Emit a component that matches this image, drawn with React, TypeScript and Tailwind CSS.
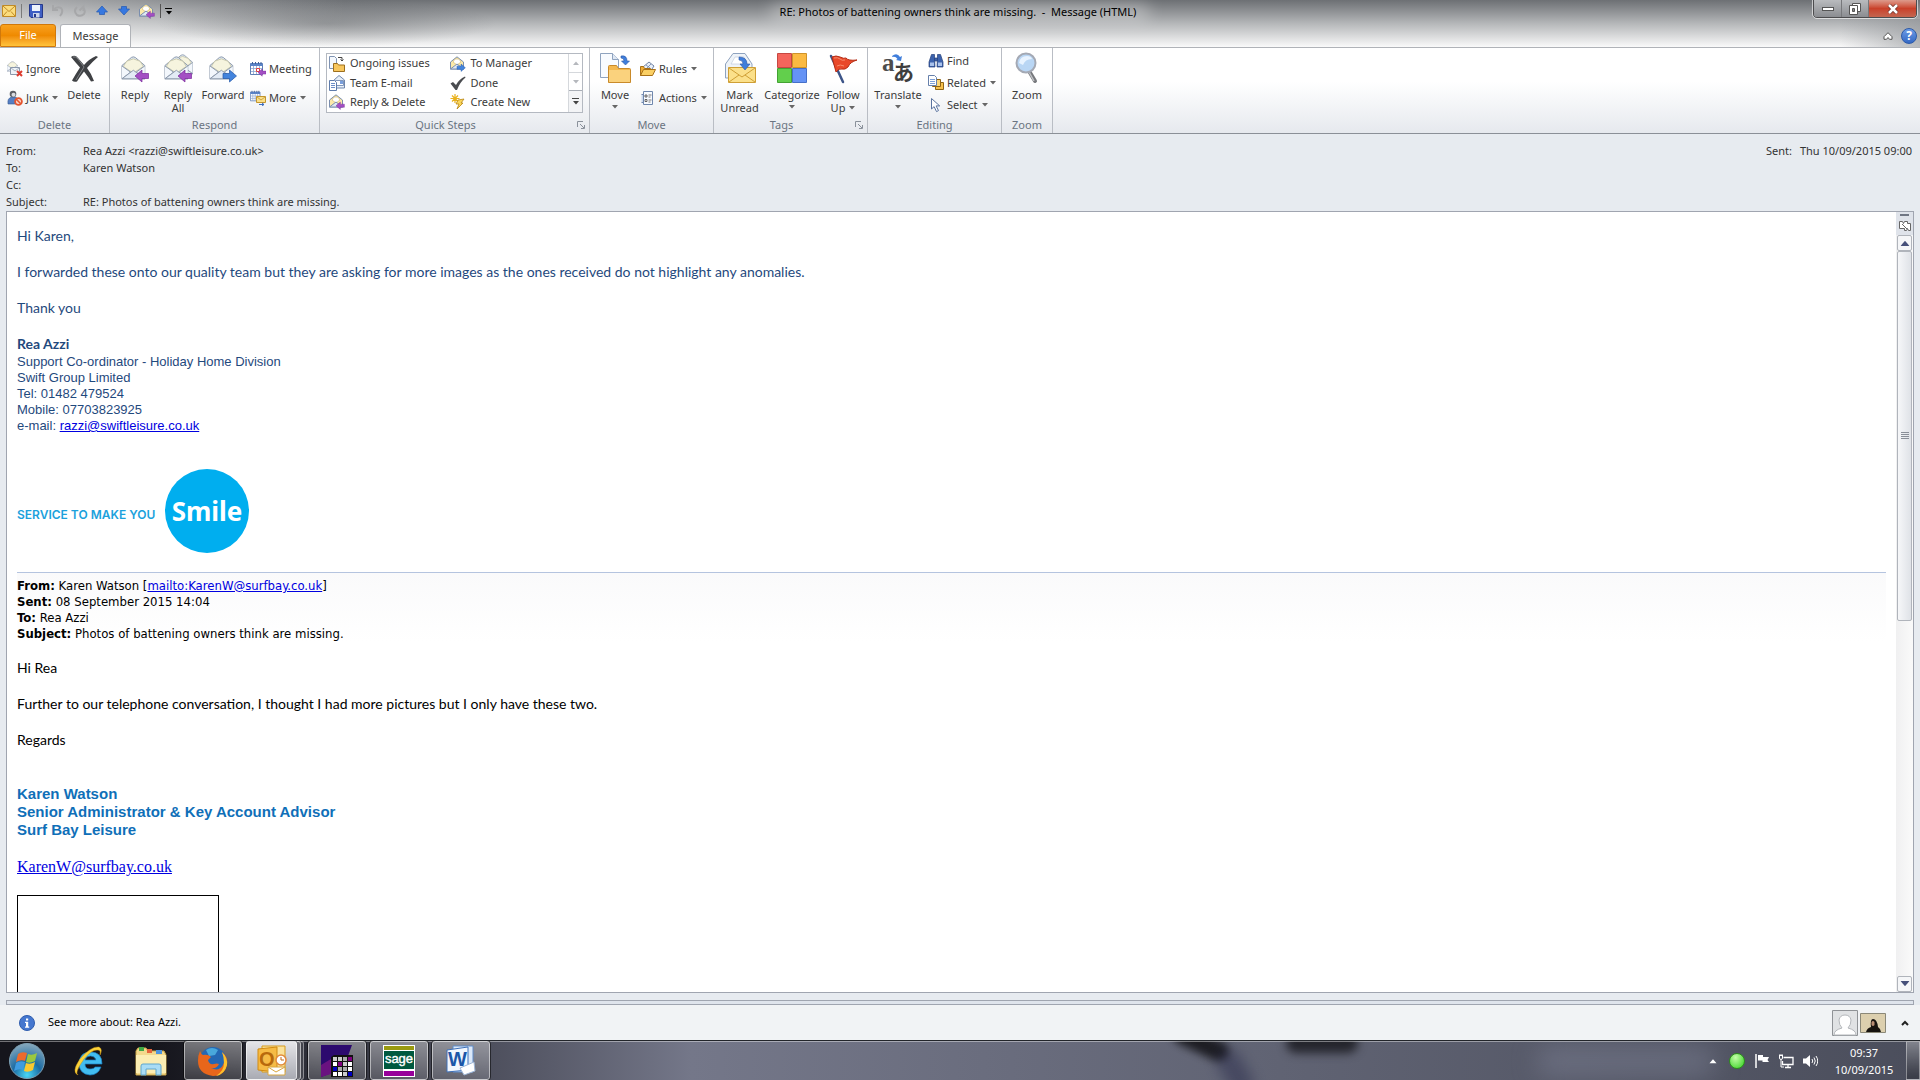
import React from "react";
import clsx from "clsx";

type IconProps = { className?: string };

/* ---------- Small shared drawings ---------- */

const Caret = ({ className = "text-[#666]" }: IconProps) => (
  <svg viewBox="0 0 6 4" className={clsx("w-[6px] h-1 shrink-0", className)}>
    <path d="M0 0h6L3 3.5z" fill="currentColor" />
  </svg>
);

const Launcher = () => (
  <svg viewBox="0 0 8 8" className="size-2" fill="none" stroke="#8a919b">
    <path d="M.5 6V.5H6M3 3l4 4M7.500 4v3.500H4" />
  </svg>
);

const LeftArrow = ({ x = 0, y = 0, s = 1 }) => (
  <path
    transform={`translate(${x} ${y}) scale(${s})`}
    d="M0 6 7 0v3.500h6.500v5H7V12z"
    fill="#a44fc4"
    stroke="#7a2b9b"
    strokeWidth=".7"
  />
);

const RightArrow = ({ x = 0, y = 0, s = 1 }) => (
  <path
    transform={`translate(${x} ${y}) scale(${s})`}
    d="M13.500 6 6.500 0v3.500H0v5h6.500V12z"
    fill="#4384dd"
    stroke="#2457a8"
    strokeWidth=".7"
  />
);

const OpenMail = ({ x = 0, y = 0, s = 1 }) => (
  <g transform={`translate(${x} ${y}) scale(${s})`} stroke="#8b98ab">
    <path d="M1 10 11 1.500q2-1.200 4 0L25 10v14H1z" fill="#dbe5f1" />
    <path d="M2.500 11 6 5.500l7-2.500 7 2.500 3.500 5.500L13 18z" fill="#f6f4de" stroke="#c9c8ac" />
    <path d="M1 10.500 10 17 1 24M25 10.500 16 17l9 7" fill="#f3f7fc" />
    <path d="M1 24 13 15l12 9z" fill="#e3ebf5" />
  </g>
);

/* ---------- Large ribbon icons ---------- */

const DeleteIcon = () => (
  <svg viewBox="0 0 32 32" className="size-8">
    <path
      d="M3 5q4-3 7 1l6 7q5-6 12-9l2 1q-6 5-11 11 4 5 7 13l-3 .5q-3-5-7-10-4 5-7 10-3 1-5-1 4-7 8-13Q7 10 3 5z"
      fill="#3f4144"
    />
    <path d="M5 5q3-1 5 2l6 8-8 13" fill="none" stroke="#7f8286" />
  </svg>
);

const ReplyIcon = () => (
  <svg viewBox="0 0 32 32" className="size-8">
    <OpenMail x={2} y={4} s={0.95} />
    <LeftArrow x={16} y={18} s={1} />
  </svg>
);

const ReplyAllIcon = () => (
  <svg viewBox="0 0 32 32" className="size-8">
    <OpenMail x={10} y={2} s={0.82} />
    <OpenMail x={2} y={4} s={0.95} />
    <LeftArrow x={16} y={18} s={1} />
  </svg>
);

const ForwardIcon = () => (
  <svg viewBox="0 0 32 32" className="size-8">
    <OpenMail x={2} y={4} s={0.95} />
    <RightArrow x={16} y={18} s={1} />
  </svg>
);

const MoveIcon = () => (
  <svg viewBox="0 0 32 32" className="size-8">
    <path d="M1.500 1.500h12l6 6v18h-18z" fill="#f8fbff" stroke="#8fa3bf" />
    <path d="M13.500 1.500v6h6" fill="#dfe8f4" stroke="#8fa3bf" />
    <path d="M22 4q6-1 6 5h2.500l-4 4-4-4H25q0-3-3-3z" fill="#3f7edb" stroke="#2b58a5" strokeWidth=".6" />
    <path d="M9.500 30.500v-16q0-1 1-1h7l2 3h11q1 0 1 1v13z" fill="#f4b84e" stroke="#c98a2a" />
    <path d="M10 30V18h21v12z" fill="#fad27d" />
  </svg>
);

const MarkUnreadIcon = () => (
  <svg viewBox="0 0 32 32" className="size-8">
    <path d="M1.500 12 9 1.500h12L28 12v14H1.500z" fill="#eef3f8" stroke="#8fa3bf" />
    <path d="M7 12 11 5h9l3 7z" fill="#fff" stroke="#b9c5d6" strokeWidth=".6" />
    <path d="M4.500 15.500h27v15h-27z" fill="#fbe08a" stroke="#cf9f35" />
    <path d="m5 16 13 9 13-9M5 30l10-7M31 30l-10-7" fill="none" stroke="#cf9f35" />
    <path d="M15 5q8 0 8 7h3l-5 6-5-6h3q0-4-4-4z" fill="#3f7edb" stroke="#2b58a5" strokeWidth=".6" />
  </svg>
);

const CategorizeIcon = () => (
  <svg viewBox="0 0 32 32" className="size-8">
    <path d="M1.500 1.500h14v14h-14z" fill="#f4655c" stroke="#c64842" />
    <path d="M16.500 1.500h14v14h-14z" fill="#fbba42" stroke="#cf932a" />
    <path d="M1.500 16.500h14v14h-14z" fill="#62cf4c" stroke="#43a233" />
    <path d="M16.500 16.500h14v14h-14z" fill="#6593f5" stroke="#456fc8" />
  </svg>
);

const FollowUpIcon = () => (
  <svg viewBox="0 0 32 32" className="size-8">
    <path d="m4 4 12 26" stroke="#3d5588" strokeWidth="2.500" strokeLinecap="round" />
    <path d="M5 5q4-2 8 0 4 2 6 1 2 3 11 2-7 2-9 7-3 3-6 2-3-1-6 3z" fill="#e9492a" stroke="#b52d15" />
    <path d="M7 6q4-1 6 1t5 1M10 14q3-2 7 0" fill="none" stroke="#f88c6d" />
  </svg>
);

const TranslateIcon = () => (
  <svg viewBox="0 0 32 32" className="size-8 overflow-visible">
    <text x="0" y="19" fontSize="25" fontFamily="Liberation Serif, serif" fontWeight="700" fill="#4d4d4d">
      a
    </text>
    <text x="11" y="28" fontSize="21" fontFamily="Noto Sans CJK JP, sans-serif" fontWeight="700" fill="#3e3e3e">
      あ
    </text>
    <path d="M10 4q5-4 8 1l2-1-1 5-5-1 1.500-1q-2-3-5-2z" fill="#3f7edb" />
  </svg>
);

const ZoomIcon = () => (
  <svg viewBox="0 0 32 32" className="size-8">
    <path d="m18 19 6 10" stroke="#77797d" strokeWidth="4" strokeLinecap="round" />
    <path d="m18 20 5 9" stroke="#c0c2c6" strokeWidth="1.500" />
    <circle cx="15" cy="11" r="9.500" fill="#b9d6f4" stroke="#a4a9b4" strokeWidth="2" />
    <path d="M8 11q1-7 8-7 4 0 5 3-7 0-9 6z" fill="#e8f3ff" />
  </svg>
);

/* ---------- 16px icons ---------- */

const IgnoreIcon = () => (
  <svg viewBox="0 0 16 16" className="size-4">
    <OpenMail x={0} y={0} s={0.42} />
    <path d="M3.500 6.500h9v7h-9z" fill="#eef3f9" stroke="#8b98ab" />
    <path d="M4 7l4 3 4-3" fill="none" stroke="#8b98ab" strokeWidth=".7" />
    <path d="m10 10 5 5m0-5-5 5" stroke="#dd3b2f" strokeWidth="2" />
  </svg>
);

const JunkIcon = () => (
  <svg viewBox="0 0 16 16" className="size-4">
    <path d="M1 14q-1-6 4-7h3q4 1 4 7z" fill="#557fc4" stroke="#34588f" strokeWidth=".6" />
    <circle cx="6" cy="4" r="3.300" fill="#5c5f66" />
    <circle cx="6.500" cy="4.800" r="2" fill="#d9dce2" />
    <circle cx="11.500" cy="11.500" r="3.400" fill="#fbd6cc" stroke="#e4552f" strokeWidth="1.800" />
    <path d="m9 9 5 5" stroke="#e4552f" strokeWidth="1.600" />
  </svg>
);

const CalendarGrid = () => (
  <>
    <path d="M.5 2.500h12v11H.5z" fill="#fff" stroke="#5f7fb5" />
    <path d="M.5 2.500h12V5H.5z" fill="#5b84c8" />
    <path d="M3.500 5v8M6.500 5v8M9.500 5v8M1 7.500h11M1 10.500h11" stroke="#8aa4cf" strokeWidth=".8" />
    <path d="M2.500 1v2M5.500 1v2M8.500 1v2M11 1v2" stroke="#3f5f96" />
  </>
);

const MeetingIcon = () => (
  <svg viewBox="0 0 16 16" className="size-4">
    <CalendarGrid />
    <path d="M6.500 7.500h3v3h-3z" fill="#fff" stroke="#e13f3f" />
    <LeftArrow x={8} y={8} s={0.6} />
  </svg>
);

const MoreIcon = () => (
  <svg viewBox="0 0 16 16" className="size-4">
    <g transform="scale(.8)">
      <CalendarGrid />
    </g>
    <path d="M6.500 6.500h9v6h-9z" fill="#fbe08a" stroke="#c2952e" />
    <path d="m7 7 4 3 4-3" fill="none" stroke="#c2952e" strokeWidth=".8" />
    <path d="M9 14.500h5m-2-1.500 2 1.500-2 1.500" fill="none" stroke="#3f6fc0" />
  </svg>
);

const OngoingIcon = () => (
  <svg viewBox="0 0 16 16" className="size-4">
    <path d="M.5.5h5l2 2v10h-7z" fill="#f4f8fd" stroke="#7f93b3" />
    <path d="M9 1.500h4v3m-1.500-1L13 5l1.500-1.500" fill="none" stroke="#444" />
    <path d="M4.500 15.500v-8h4l1 1.500h6v6.500z" fill="#f7c65d" stroke="#9c6f1f" />
  </svg>
);

const TeamMailIcon = () => (
  <svg viewBox="0 0 16 16" className="size-4">
    <path d="M4 6 10 .5 15.500 5v8H4z" fill="#e6eef8" stroke="#6f87ad" />
    <path d="M6.500 5.500h8v5h-8z" fill="#fff" stroke="#8297ba" />
    <path d="M11 6h3v3h-3z" fill="#7ba0dd" />
    <path d="M.5 5.500h5l2 2v8h-7z" fill="#fff" stroke="#5f7cab" />
    <path d="M2 8.500h4M2 10.500h4M2 12.500h4" stroke="#6d8fc8" />
  </svg>
);

const YellowMail = () => (
  <>
    <path d="M.5 6 7 .8 13.500 6v7H.5z" fill="#fbe9a9" stroke="#7a8eae" />
    <path d="m3 6 2-3h4l2 3-4 3z" fill="#fff" stroke="#cdb268" strokeWidth=".6" />
    <path d="M.5 13 7 8l6.500 5z" fill="#dfe8f4" stroke="#7a8eae" />
  </>
);

const ReplyDeleteIcon = () => (
  <svg viewBox="0 0 16 16" className="size-4">
    <YellowMail />
    <LeftArrow x={7} y={8} s={0.62} />
  </svg>
);

const ToManagerIcon = () => (
  <svg viewBox="0 0 16 16" className="size-4">
    <YellowMail />
    <RightArrow x={7} y={8} s={0.62} />
  </svg>
);

const DoneIcon = () => (
  <svg viewBox="0 0 16 16" className="size-4">
    <path d="m.5 8.500 2.500-1.500 3 3Q9 4 15 1.500l.5 1Q10 7 7 15H5.500z" fill="#4a4c50" />
  </svg>
);

const CreateNewIcon = () => (
  <svg viewBox="0 0 16 16" className="size-4">
    <path d="M5 0v9M.5 4.500h9M2 1.500l6 6M8 1.500l-6 6" stroke="#e9b11d" strokeWidth="1.200" />
    <path d="m8 6 6-1-3 4h2l-6 6 2-5H6z" fill="#fbd75c" stroke="#b98512" strokeWidth=".8" />
  </svg>
);

const RulesIcon = () => (
  <svg viewBox="0 0 16 16" className="size-4">
    <path d="m3 6 6-5 5 4-4 6H3z" fill="#e9eff8" stroke="#6f83a5" />
    <path d="m6 4 4 3m1-4-4 4" stroke="#6f83a5" strokeWidth=".8" />
    <path d="M.5 14.500v-9h3l1 2h6v7z" fill="#f0ad35" stroke="#a87118" />
    <path d="m.5 14.500 3-6h12l-3 6z" fill="#fbd064" stroke="#a87118" />
  </svg>
);

const ActionsIcon = () => (
  <svg viewBox="0 0 16 16" className="size-4">
    <path d="M3.500 1.500h9v13h-9z" fill="#f8fbff" stroke="#6f87ad" />
    <path d="M1.500 4.500h2v8h-2" fill="#cbd8ec" stroke="#6f87ad" />
    <path d="M5 5h2v2H5zM5 9.500h2v2H5z" fill="none" stroke="#444" strokeWidth=".8" />
    <path d="M8.500 5h3M8.500 7h2M8.500 10h3M8.500 12h2" stroke="#555" strokeWidth=".8" />
  </svg>
);

const FindIcon = () => (
  <svg viewBox="0 0 16 16" className="size-4" fill="#3c62ad" stroke="#25407a" strokeWidth=".7">
    <path d="M3.500 1.500h3V5l.5 9H1V9z" />
    <path d="M9.500 1.500h3L15 9v5H9l.5-9z" />
    <path d="M6.500 5h3v3h-3z" />
    <path d="M2 9.500h4v3.500H2zM10 9.500h4v3.500h-4z" fill="#a9c2ec" stroke="none" />
  </svg>
);

const RelatedIcon = () => (
  <svg viewBox="0 0 16 16" className="size-4">
    <path d="M7.500 7.500h8v7h-8z" fill="#f6c04c" stroke="#8f6515" />
    <path d="M4.500 4.500h8v7h-8z" fill="#fbd678" stroke="#8f6515" />
    <path d="M.5.5h6l2 2v8h-8z" fill="#fff" stroke="#6680ab" />
    <path d="M2 4.500h5M2 6.500h5M2 8.500h5" stroke="#7da0d8" />
  </svg>
);

const SelectIcon = () => (
  <svg viewBox="0 0 16 16" className="size-4">
    <path d="M3.500 1.500v10.500l2.600-2.400 2.400 5 2-1-2.400-4.700h3.600z" fill="#fff" stroke="#5b74a0" />
  </svg>
);

/* ---------- Ribbon building blocks ---------- */

const BigButton = ({
  icon: Icon,
  lines,
  caret,
  width,
}: {
  icon: React.FC;
  lines: string[];
  caret?: "below" | "inline";
  width: string;
}) => (
  <button type="button" className={clsx("flex flex-col items-center pt-1 leading-[13px]", width)}>
    <Icon />
    <span className="mt-1 whitespace-nowrap">{lines[0]}</span>
    {lines[1] && (
      <span className="flex items-center gap-1">
        {lines[1]}
        {caret === "inline" && <Caret />}
      </span>
    )}
    {caret === "below" && <Caret className="mt-1 text-[#666]" />}
  </button>
);

const SmallButton = ({ icon: Icon, label, caret }: { icon: React.FC; label: string; caret?: boolean }) => (
  <button type="button" className="flex items-center gap-[3px] h-[22px] whitespace-nowrap">
    <Icon />
    <span>{label}</span>
    {caret && <Caret className="ml-px text-[#666]" />}
  </button>
);

const Group = ({
  title,
  width,
  launcher,
  children,
}: {
  title: string;
  width: string;
  launcher?: boolean;
  children: React.ReactNode;
}) => (
  <section className={clsx("relative flex flex-col shrink-0 border-r border-[#b9bdc4]", width)}>
    <div className="flex h-[69px] shrink-0">{children}</div>
    <h2 className={clsx("text-center text-[#6a7481] leading-4", launcher && "pr-[18px]")}>{title}</h2>
    {launcher && (
      <button type="button" aria-label={`${title} options`} className="absolute right-1 bottom-1">
        <Launcher />
      </button>
    )}
  </section>
);

const quickSteps = [
  { icon: OngoingIcon, label: "Ongoing issues" },
  { icon: ToManagerIcon, label: "To Manager" },
  { icon: TeamMailIcon, label: "Team E-mail" },
  { icon: DoneIcon, label: "Done" },
  { icon: ReplyDeleteIcon, label: "Reply & Delete" },
  { icon: CreateNewIcon, label: "Create New" },
];

const Ribbon = () => (
  <div className="flex h-[87px] shrink-0 border-t border-b border-t-[#b0b3b8] border-b-[#8b9097] bg-linear-to-b from-white from-40% to-[#e6e9ee] text-[11px] text-[#3b3b3b]">
    <Group title="Delete" width="w-[110px]">
      <div className="flex flex-col gap-[7px] pt-[10px] pl-[7px] w-[62px]">
        <SmallButton icon={IgnoreIcon} label="Ignore" />
        <SmallButton icon={JunkIcon} label="Junk" caret />
      </div>
      <BigButton icon={DeleteIcon} lines={["Delete"]} width="w-[44px]" />
    </Group>

    <Group title="Respond" width="w-[210px]">
      <BigButton icon={ReplyIcon} lines={["Reply"]} width="w-[50px]" />
      <BigButton icon={ReplyAllIcon} lines={["Reply", "All"]} width="w-[36px]" />
      <BigButton icon={ForwardIcon} lines={["Forward"]} width="w-[54px]" />
      <div className="flex flex-col gap-[7px] pt-[10px]">
        <SmallButton icon={MeetingIcon} label="Meeting" />
        <SmallButton icon={MoreIcon} label="More" caret />
      </div>
    </Group>

    <Group title="Quick Steps" width="w-[270px]" launcher>
      <div className="flex h-[60px] w-[257px] ml-[6px] mt-[5px] border border-[#b4b9c1] bg-white">
        <div className="grid grid-cols-2 grow">
          {quickSteps.map(({ icon: Icon, label }) => (
            <button key={label} type="button" className="flex items-center gap-[5px] pl-[2px] whitespace-nowrap">
              <Icon />
              {label}
            </button>
          ))}
        </div>
        <div className="flex flex-col w-[14px] border-l border-[#d5d8dc]">
          <button type="button" aria-label="Previous row" className="flex grow items-center justify-center border-b border-[#d5d8dc]">
            <Caret className="rotate-180 text-[#b5b8bd]" />
          </button>
          <button type="button" aria-label="Next row" className="flex grow items-center justify-center">
            <Caret className="text-[#b5b8bd]" />
          </button>
          <button type="button" aria-label="More quick steps" className="flex flex-col gap-[2px] grow items-center justify-center border-t border-[#a9aeb6] bg-[#f3f4f6]">
            <span className="w-[7px] h-px bg-[#444]" />
            <Caret className="text-[#444]" />
          </button>
        </div>
      </div>
    </Group>

    <Group title="Move" width="w-[124px]">
      <BigButton icon={MoveIcon} lines={["Move"]} caret="below" width="w-[50px]" />
      <div className="flex flex-col gap-[7px] pt-[10px]">
        <SmallButton icon={RulesIcon} label="Rules" caret />
        <SmallButton icon={ActionsIcon} label="Actions" caret />
      </div>
    </Group>

    <Group title="Tags" width="w-[154px]" launcher>
      <BigButton icon={MarkUnreadIcon} lines={["Mark", "Unread"]} width="w-[51px]" />
      <BigButton icon={CategorizeIcon} lines={["Categorize"]} caret="below" width="w-[54px]" />
      <BigButton icon={FollowUpIcon} lines={["Follow", "Up"]} caret="inline" width="w-[48px]" />
    </Group>

    <Group title="Editing" width="w-[134px]">
      <BigButton icon={TranslateIcon} lines={["Translate"]} caret="below" width="w-[60px]" />
      <div className="flex flex-col pt-[2px]">
        <SmallButton icon={FindIcon} label="Find" />
        <SmallButton icon={RelatedIcon} label="Related" caret />
        <SmallButton icon={SelectIcon} label="Select" caret />
      </div>
    </Group>

    <Group title="Zoom" width="w-[51px]">
      <BigButton icon={ZoomIcon} lines={["Zoom"]} width="w-[50px]" />
    </Group>
  </div>
);

/* ---------- Title bar ---------- */

const QuickAccess = () => (
  <div className="flex items-center h-[22px] pl-[2px] text-[#555]">
    <svg viewBox="0 0 14 12" className="w-[14px] h-3">
      <path d="M.5.500h13v11H.5z" fill="#fbdc7c" stroke="#c08a26" />
      <path d="m1 1 6 5.500L13 1M1 11l4-4.500M13 11 9 6.500" fill="none" stroke="#c08a26" />
    </svg>
    <span className="w-px h-[14px] ml-[5px] mr-[7px] bg-[#7b7b7b]" />
    <button type="button" aria-label="Save">
      <svg viewBox="0 0 14 14" className="size-[14px]">
        <path d="M.5.500h13v13H2l-1.500-1.500z" fill="#3f5fc4" stroke="#26398a" />
        <path d="M3 1h8v6H3z" fill="#eef3fb" />
        <path d="M4 9h6.500v4.500H4z" fill="#cdd6ea" />
        <path d="M5 10h2v3H5z" fill="#26398a" />
      </svg>
    </button>
    <button type="button" aria-label="Undo" className="ml-2">
      <svg viewBox="0 0 14 14" className="size-[14px]" fill="none" stroke="#a6a7a9" strokeWidth="2">
        <path d="M2 1v5h5M2 6q4-4 8-2 3 3-1 8" />
      </svg>
    </button>
    <button type="button" aria-label="Redo" className="ml-2">
      <svg viewBox="0 0 14 14" className="size-[14px]" fill="none" stroke="#a6a7a9" strokeWidth="2">
        <path d="M4 3q-4 4 0 8 4 2 7-1 2-4-1-7M6.500 6.500 10.500 2.500V7" />
      </svg>
    </button>
    <button type="button" aria-label="Previous item" className="ml-2">
      <svg viewBox="0 0 14 14" className="size-[14px]">
        <path d="m7 2 5.500 6H9.500v2.500h-5V8h-3z" fill="#3778e0" stroke="#2459b3" strokeWidth=".7" />
      </svg>
    </button>
    <button type="button" aria-label="Next item" className="ml-2">
      <svg viewBox="0 0 14 14" className="size-[14px]">
        <path d="m7 11 5.500-6H9.500V2.500h-5V5h-3z" fill="#3778e0" stroke="#2459b3" strokeWidth=".7" />
      </svg>
    </button>
    <button type="button" aria-label="Reply and delete" className="ml-2">
      <ReplyDeleteIcon />
    </button>
    <span className="w-px h-[14px] ml-[5px] mr-1 bg-[#555]" />
    <button type="button" aria-label="Customize toolbar" className="flex flex-col gap-[2px] items-center">
      <span className="w-[7px] h-px bg-black" />
      <Caret className="text-black" />
    </button>
  </div>
);

const WindowButtons = () => (
  <div className="absolute right-[3px] top-0 flex h-[18px] rounded-b-[4px] border border-t-0 border-[#4c4c4e] outline outline-white/60 overflow-hidden">
    <button type="button" aria-label="Minimize" className="flex items-center justify-center w-7 border-r border-[#77787b] bg-linear-to-b from-[#b9bbbe] to-[#8b8d91]">
      <span className="w-[12px] h-1 border border-[#555] bg-white" />
    </button>
    <button type="button" aria-label="Restore" className="flex items-center justify-center w-[27px] border-r border-[#77787b] bg-linear-to-b from-[#b9bbbe] to-[#8b8d91]">
      <svg viewBox="0 0 12 12" className="size-3" fill="#fff" stroke="#555">
        <path d="M3.500.500h8v8h-8z" />
        <path d="M.5 2.500h8v9h-8z" />
        <path d="M3.500 5.500h2v3h-2z" fill="#888" />
      </svg>
    </button>
    <button type="button" aria-label="Close" className="flex items-center justify-center w-[47px] bg-linear-to-b from-[#dc9a8c] via-[#c9402a] to-[#c4654f]">
      <svg viewBox="0 0 12 10" className="w-3 h-[10px]">
        <path d="m2 1 8 8M10 1 2 9" stroke="#6b3028" strokeWidth="4" />
        <path d="m2 1 8 8M10 1 2 9" stroke="#fff" strokeWidth="2.500" />
      </svg>
    </button>
  </div>
);

const TitleBar = () => (
  <header className="relative shrink-0 h-[47px] overflow-hidden bg-linear-to-b from-[#6d7074] via-[#b5b7b9] to-[#fafafa]">
    <div className="absolute inset-0 bg-linear-to-r from-white/45 from-0% via-transparent via-18% to-transparent" />
    <div className="absolute inset-y-0 left-[8%] w-[18%] bg-radial from-[#3d4044]/30 to-transparent to-70%" />
    <div className="absolute right-0 bottom-0 w-[80px] h-7 bg-linear-to-r from-transparent to-[#8f9296]/60" />
    <div className="absolute top-1 left-1/2 w-[380px] h-4 -translate-x-1/2 rounded-full bg-white/35 blur-[8px]" />
    <h1 className="absolute inset-x-0 top-0 pr-1 text-center text-[11px] leading-6 text-black whitespace-pre">
      {"RE: Photos of battening owners think are missing.  -  Message (HTML)"}
    </h1>
    <div className="relative flex flex-col h-full">
      <QuickAccess />
      <nav className="flex mt-[2px] h-[23px] text-[11px]">
        <button type="button" className="w-14 rounded-t-[3px] border border-[#d0780b] bg-linear-to-b from-[#f9a11c] via-[#ef8a00] to-[#ffc33a] text-white">
          File
        </button>
        <button type="button" className="w-[71px] ml-1 rounded-t-[3px] border border-b-0 border-[#b0b3b8] bg-white text-[#3b3b3b]">
          Message
        </button>
        <div className="flex items-center gap-2 ml-auto mr-[3px]">
          <button type="button" aria-label="Minimize ribbon">
            <svg viewBox="0 0 10 8" className="w-[10px] h-2" fill="#fff" stroke="#555">
              <path d="m5 .7 4 4v2.600H6.500L5 5.500 3.500 7.300H1V4.700z" />
            </svg>
          </button>
          <button type="button" aria-label="Help" className="size-4 rounded-full border border-[#2c5aa8] bg-linear-to-b from-[#6d9ce6] to-[#3468c4] text-[12px] leading-[14px] font-bold text-white">
            ?
          </button>
        </div>
      </nav>
    </div>
    <WindowButtons />
  </header>
);

/* ---------- Message ---------- */

const fields = [
  ["From:", "Rea Azzi <razzi@swiftleisure.co.uk>"],
  ["To:", "Karen Watson"],
  ["Cc:", ""],
  ["Subject:", "RE: Photos of battening owners think are missing."],
];

const MessageHeader = () => (
  <div className="flex justify-between shrink-0 pt-2 pb-px pl-[6px] pr-2 text-[11px] leading-[17px] text-[#333]">
    <dl>
      {fields.map(([name, value]) => (
        <div key={name} className="flex h-[17px]">
          <dt className="w-[77px]">{name}</dt>
          <dd>{value}</dd>
        </div>
      ))}
    </dl>
    <dl className="flex gap-2">
      <dt>Sent:</dt>
      <dd>Thu 10/09/2015 09:00</dd>
    </dl>
  </div>
);

const MailLink = ({ href, children }: { href: string; children: string }) => (
  <a href={`mailto:${href}`} className="text-[#0000e0] underline">
    {children}
  </a>
);

const lato = "font-['Lato',sans-serif] text-[14px] leading-[18px]";
const arial = "font-['Liberation_Sans',sans-serif]";

const MessageBody = () => (
  <article className="grow min-w-0 pt-[15px] px-[10px] overflow-hidden text-black">
    <div className={clsx(lato, "flex flex-col gap-[18px] text-[#1f497d]")}>
      <p>Hi Karen,</p>
      <p>I forwarded these onto our quality team but they are asking for more images as the ones received do not highlight any anomalies.</p>
      <p>Thank you</p>
      <p className="font-bold">Rea Azzi</p>
    </div>
    <div className={clsx(arial, "pt-px text-[13px] leading-4 text-[#1f497d]")}>
      <p>Support Co-ordinator - Holiday Home Division</p>
      <p>Swift Group Limited</p>
      <p>Tel: 01482 479524</p>
      <p>Mobile: 07703823925</p>
      <p>
        e-mail: <MailLink href="razzi@swiftleisure.co.uk">razzi@swiftleisure.co.uk</MailLink>
      </p>
    </div>

    {/* Smile logo */}
    <div className="flex items-center mt-[35px] mb-[19px]">
      <span className="w-[148px] pt-2 font-['Inter',sans-serif] text-[12px] font-semibold text-[#1ba1dc] whitespace-nowrap">
        SERVICE TO MAKE YOU
      </span>
      <span className="flex items-center justify-center size-[84px] rounded-full bg-[#00aeef] text-[26px] font-bold text-white">
        Smile
      </span>
    </div>

    <div className="pt-[5px] border-t border-[#b5c4df] bg-linear-to-b from-[#fafafb] to-white font-['DejaVu_Sans_Condensed','Noto_Sans',sans-serif] text-[13px] leading-4">
      <p>
        <b>From:</b> Karen Watson [<MailLink href="KarenW@surfbay.co.uk">mailto:KarenW@surfbay.co.uk</MailLink>]
      </p>
      <p>
        <b>Sent:</b> 08 September 2015 14:04
      </p>
      <p>
        <b>To:</b> Rea Azzi
      </p>
      <p>
        <b>Subject:</b> Photos of battening owners think are missing.
      </p>
    </div>

    <div className={clsx(lato, "flex flex-col gap-[18px] mt-[17px]")}>
      <p>Hi Rea</p>
      <p>Further to our telephone conversation, I thought I had more pictures but I only have these two.</p>
      <p>Regards</p>
    </div>
    <div className={clsx(arial, "mt-9 text-[15px] leading-[18px] font-bold text-[#0f6fb8]")}>
      <p>Karen Watson</p>
      <p>Senior Administrator &amp; Key Account Advisor</p>
      <p>Surf Bay Leisure</p>
    </div>
    <p className="mt-[19px] mb-[19px] font-['Liberation_Serif',serif] text-[16px] leading-[18px]">
      <MailLink href="KarenW@surfbay.co.uk">KarenW@surfbay.co.uk</MailLink>
    </p>
    <div className="w-[202px] h-[140px] border border-black" />
  </article>
);

const ScrollBar = () => (
  <div className="flex flex-col shrink-0 w-[17px] px-px bg-linear-to-r from-[#f0f0f1] to-[#fafafa]">
    <div className="flex flex-col items-center gap-1 h-[23px] -mx-px pt-[2px] bg-[#dfe3ea]">
      <span className="w-[9px] h-[2px] bg-[#6f7683]" />
      <svg viewBox="0 0 12 12" className="size-3" fill="#fff" stroke="#666">
        <path d="M.5 1.500h3l1 2 1-2h3v2h3v7h-2l-1-2-1 2h-2v-2h-5z" />
        <path d="m3 4 5 5" />
      </svg>
    </div>
    <button type="button" aria-label="Scroll up" className="flex items-center justify-center h-4 shrink-0 rounded-[2px] border border-[#b0b4bb] bg-[#f5f6f8]">
      <Caret className="scale-150 rotate-180 text-[#46507a]" />
    </button>
    <div className="flex flex-col grow">
      <div className="flex flex-col items-center justify-center gap-px h-[51%] rounded-[2px] border border-[#b0b4bb] bg-linear-to-r from-[#f6f7f9] to-[#dfe2e7]">
        <span className="w-2 h-px bg-[#8a8f98]" />
        <span className="w-2 h-px bg-[#8a8f98]" />
        <span className="w-2 h-px bg-[#8a8f98]" />
        <span className="w-2 h-px bg-[#8a8f98]" />
      </div>
    </div>
    <button type="button" aria-label="Scroll down" className="flex items-center justify-center h-4 shrink-0 rounded-[2px] border border-[#b0b4bb] bg-[#f5f6f8]">
      <Caret className="scale-150 text-[#46507a]" />
    </button>
  </div>
);

const PeoplePane = () => (
  <div className="flex items-center h-[35px] shrink-0 pl-[19px] pr-[11px] bg-[#f1f3f5] text-[11px] text-black">
    <svg viewBox="0 0 16 16" className="size-4">
      <circle cx="8" cy="8" r="7.500" fill="#4577cf" stroke="#2f5dae" />
      <path d="M7 3.500h2.200v2H7zM6 6.800h3.200v4.700h1v1.200H6v-1.200h1V8H6z" fill="#fff" />
    </svg>
    <span className="ml-[13px]">See more about: Rea Azzi.</span>
    <svg viewBox="0 0 26 26" className="size-[26px] ml-auto">
      <path d="M.5.500h25v25H.5z" fill="#e0e2e4" stroke="#8f9296" />
      <path d="M2 25q0-5 8-7-3-3-3-8 1-5 6-5t6 5q0 5-3 8 8 2 8 7z" fill="#fff" stroke="#b4b7bb" />
    </svg>
    <svg viewBox="0 0 26 20" className="w-[26px] h-5 ml-[2px]">
      <path d="M.5.500h25v19H.5z" fill="#dccfae" stroke="#8b8878" />
      <path d="M6 19q1-4 5-5-1-8 2-8 4 0 5 8 3 2 3 5z" fill="#17130f" />
      <path d="M11.500 9q1.500-2 3 0v3q-1.500 2-3 0z" fill="#b98d73" />
    </svg>
    <button type="button" aria-label="Expand people pane" className="ml-[15px]">
      <svg viewBox="0 0 8 6" className="w-2 h-[6px]" fill="none" stroke="#222" strokeWidth="2">
        <path d="m1 5 3-3 3 3" />
      </svg>
    </button>
  </div>
);

/* ---------- Taskbar ---------- */

const StartOrb = () => (
  <svg viewBox="0 0 38 38" className="size-[38px]">
    <defs>
      <radialGradient id="orb" cx=".5" cy=".9" r=".9">
        <stop offset="0" stopColor="#49d8f5" />
        <stop offset=".45" stopColor="#1b6ba3" />
        <stop offset="1" stopColor="#88a9bd" />
      </radialGradient>
    </defs>
    <circle cx="19" cy="19" r="17.500" fill="url(#orb)" stroke="#7da0b4" />
    <path d="M10 12q4-3 9-1l-2 8q-4-2-9 1z" fill="#ee6a2c" />
    <path d="M20 12q4 2 9-1l-2 8q-5 3-9 1z" fill="#9bc83e" />
    <path d="M8 21q4-3 9-1l-2 8q-4-2-9 1z" fill="#3f9be0" />
    <path d="M18 21q4 2 9-1l-2 8q-5 3-9 1z" fill="#fbc92f" />
  </svg>
);

const ExplorerE = () => (
  <svg viewBox="0 0 32 32" className="size-8">
    <path d="M29 19H12q0 5 5 5 4 0 5-2h6q-3 8-11 8Q6 29 6 18 7 7 17.500 7 29 7 29 19zm-6-4q-1-4-5.500-4T12 15z" fill="#42bdf0" stroke="#1a7fc4" strokeWidth=".7" />
    <path d="M5 30Q-2 27 7 14 18 1 26 2q4 2 1 8 1-5-2-5-6-1-14 9Q1 28 5 30z" fill="#fbd33c" stroke="#d39a12" strokeWidth=".5" />
  </svg>
);

const FolderIcon = () => (
  <svg viewBox="0 0 34 32" className="w-[34px] h-8">
    <path d="M2 6 4 3h8l2 3h16l2 4v20H2z" fill="#f3d98c" stroke="#c9a648" />
    <path d="M5 2h5v4H5z" fill="#3fa845" />
    <path d="M13 4h5v4h-5z" fill="#e6643b" />
    <path d="M22 5h6v4h-6z" fill="#4d93dd" />
    <path d="M2 10h30v18H2z" fill="#fbedb3" />
    <path d="M7 30V21q0-2 2-2h16q2 0 2 2v9h-5v-6H12v6z" fill="#a9dcf5" stroke="#5fa6ce" />
  </svg>
);

const FirefoxIcon = () => (
  <svg viewBox="0 0 32 32" className="size-8">
    <circle cx="16" cy="15" r="13" fill="#2467b3" />
    <path d="M9 5q6-4 12 0l-3 5-6 1z" fill="#49a8dc" />
    <path d="M3 6q1 3 3 4 5-1 8 2l-3 3q1 5 6 4 3-1 5 0-2 5-8 4 8 4 12-3 3-6-1-13 6 5 5 12-2 12-14 12Q1 29 1 16 1 10 3 6z" fill="#e8661b" />
    <path d="M25 7q6 6 5 13-2 9-11 11 8-5 8-13 0-6-2-11z" fill="#fbc02c" />
  </svg>
);

const OutlookIcon = () => (
  <svg viewBox="0 0 32 32" className="size-8">
    <path d="M6 1h23v26H6z" fill="#fbe29a" stroke="#d79b1c" />
    <path d="M2 4 21 2v25L2 25z" fill="#f6bb45" stroke="#d08a12" />
    <text x="3" y="21" fontSize="20" fontFamily="Liberation Sans, sans-serif" fontWeight="700" fill="#b8690c">
      O
    </text>
    <path d="M12 22h17v8H12z" fill="#fff" stroke="#d9a741" />
    <path d="m12 22 8 5 9-5" fill="none" stroke="#d9a741" />
    <circle cx="25" cy="15" r="5" fill="#fff" stroke="#e08a3c" strokeWidth="1.500" />
    <path d="M25 12v3h3" fill="none" stroke="#c26a1b" />
  </svg>
);

const gridColors = ["#ccc", "#ccc", "#aaa", "#800080", "#fff", "#800080", "#ccc", "#fff", "#0000c0", "#aaa", "#aaa", "#fff", "#fff", "#fff", "#ccc", "#0000c0"];

const GridAppIcon = () => (
  <svg viewBox="0 0 32 32" className="size-8">
    <path d="M0 0h31l-4 11-16 2-3 16-8 3z" fill="#2c0a6e" />
    <path d="M0 20 10 14v15l-10 3z" fill="#6a1280" />
    <path d="M10 12 13 10h19v22H10z" fill="#111" />
    {gridColors.map((fill, i) => (
      <rect key={i} x={12 + (i % 4) * 5} y={12 + Math.floor(i / 4) * 5} width="4" height="4" fill={fill} />
    ))}
  </svg>
);

const SageIcon = () => (
  <svg viewBox="0 0 32 32" className="size-8">
    <path d="M0 0h32v32H0z" fill="#fff" />
    <path d="M1 1h30v4H1z" fill="#9a9a10" />
    <path d="M1 6h30v18H1z" fill="#00593f" />
    <path d="M1 26h30v5H1z" fill="#97009a" />
    <text x="16" y="18" textAnchor="middle" fontSize="13" fontFamily="Liberation Sans, sans-serif" fill="#fff" stroke="#fff" strokeWidth=".4">
      sage
    </text>
  </svg>
);

const WordIcon = () => (
  <svg viewBox="0 0 32 32" className="size-8">
    <path d="M8 1h20v26H8z" fill="#dbe8f8" stroke="#5f8cc9" />
    <path d="M2 5 23 2v23L2 27z" fill="#f1f6fd" stroke="#3e70b8" />
    <text x="3" y="21" fontSize="20" fontFamily="Liberation Sans, sans-serif" fontWeight="700" fill="#1c56a8">
      W
    </text>
    <path d="m15 23 14-6 1 9-11 4z" fill="#fff" stroke="#9db4d4" />
  </svg>
);

const tasks = [
  { name: "Firefox", icon: FirefoxIcon },
  { name: "Outlook", icon: OutlookIcon, active: true },
  { name: "Remote desktop", icon: GridAppIcon },
  { name: "Sage", icon: SageIcon },
  { name: "Word", icon: WordIcon },
];

const Taskbar = () => (
  <footer className="relative flex items-stretch h-10 shrink-0 overflow-hidden border-t border-[#22252a] bg-linear-to-r from-[#15151c] from-8% via-[#747789] via-36% to-[#4b4e5c]">
    {/* Wallpaper showing through the glass */}
    <div className="absolute -top-2 left-[61%] w-[60px] h-5 rotate-[25deg] rounded-full bg-[#15151a]/90 blur-[4px]" />
    <div className="absolute -top-2 left-[67%] w-[72px] h-5 rounded-full bg-[#15151a]/80 blur-[5px]" />
    <div className="absolute -bottom-1 left-[63%] w-[50px] h-6 rotate-[60deg] rounded-full bg-[#2a2b4c]/50 blur-[7px]" />
    <div className="absolute top-1 left-[80%] w-[180px] h-8 rounded-full bg-[#7c7f93]/50 blur-[12px]" />
    <div className="absolute inset-x-0 top-0 h-px bg-white/40" />
    <div className="relative flex items-center w-full">
      <button type="button" aria-label="Start" className="flex justify-center w-[54px]">
        <StartOrb />
      </button>
      <button type="button" aria-label="Internet Explorer" className="flex justify-center w-[70px]">
        <ExplorerE />
      </button>
      <button type="button" aria-label="File Explorer" className="flex justify-center w-[54px]">
        <FolderIcon />
      </button>
      <div className="flex h-full gap-1 pl-[6px]">
        {tasks.map(({ name, icon: Icon, active }) =>
          active ? (
            <div key={name} className="flex w-[58px]">
              <button type="button" aria-label={name} className="flex items-center justify-center w-[51px] rounded-[3px] border border-white/60 bg-linear-to-b from-[#e5e5e8] to-[#a9abb3]">
                <Icon />
              </button>
              <span className="w-1 rounded-r-[3px] border border-l-0 border-white/50 bg-white/30" />
              <span className="w-[3px] rounded-r-[3px] border border-l-0 border-white/40 bg-white/10" />
            </div>
          ) : (
            <button
              key={name}
              type="button"
              aria-label={name}
              className="flex items-center justify-center w-[58px] rounded-[3px] border border-white/50 bg-linear-to-b from-white/40 to-white/15 outline outline-black/50"
            >
              <Icon />
            </button>
          ),
        )}
      </div>

      {/* Tray */}
      <div className="flex items-center h-full ml-auto text-white">
        <button type="button" aria-label="Show hidden icons">
          <Caret className="rotate-180 scale-125 text-white" />
        </button>
        <span className="size-4 ml-[13px] rounded-full border border-[#2c8f1c] bg-radial-[at_40%_25%] from-[#c4ffa8] to-[#2fd01c]" />
        <svg viewBox="0 0 16 16" className="size-4 ml-[9px]">
          <path d="M2 1v14" stroke="#fff" strokeWidth="1.500" />
          <path d="M4 2h5v2h6l-1.500 3L15 9H8.500V7.500H4z" fill="#fff" />
        </svg>
        <svg viewBox="0 0 16 16" className="size-4 ml-2" fill="none" stroke="#fff">
          <path d="M5.500 4.500h9.500v7H4.500V8M7 14.500h6M10 12v2" strokeWidth="1.300" />
          <path d="M1 2.500h4M1.500 3v2q0 1.500 1.500 1.500T4.500 5V3M3 6.500V14h3M2 1v1.500M4 1v1.500" />
        </svg>
        <svg viewBox="0 0 16 16" className="size-4 ml-2">
          <path d="M1 5.500h3L8 2v12l-4-3.500H1z" fill="#fff" />
          <path d="M10 6q1.500 2 0 4M12 4.500q2.500 3.500 0 7M14 3q3.500 5 0 10" fill="none" stroke="#fff" />
        </svg>
        <time className="w-[84px] ml-1 text-center text-[11px] leading-[17px]">
          09:37
          <br />
          10/09/2015
        </time>
        <button type="button" aria-label="Show desktop" className="h-full w-[14px] border border-white/40 bg-linear-to-b from-white/30 to-black/20" />
      </div>
    </div>
  </footer>
);

const App = () => {
  return (
    <div className="flex flex-col h-screen overflow-hidden bg-[#e7ebf0] font-['Noto_Sans',sans-serif]">
      <TitleBar />
      <Ribbon />
      <MessageHeader />
      <main className="flex grow min-h-0 mx-[6px] border border-[#a0a5b0] bg-white">
        <MessageBody />
        <ScrollBar />
      </main>
      <div className="h-[5px] shrink-0 mx-[6px] mt-[7px] border border-[#a0a5b0] bg-[#dfe4ec]" />
      <PeoplePane />
      <Taskbar />
    </div>
  );
};

export default App;
